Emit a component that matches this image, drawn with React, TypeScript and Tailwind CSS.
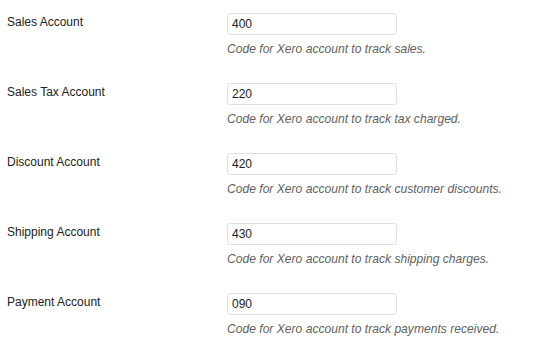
import React from 'react';

const rows = [
  { label: 'Sales Account', value: '400', hint: 'Code for Xero account to track sales.' },
  { label: 'Sales Tax Account', value: '220', hint: 'Code for Xero account to track tax charged.' },
  { label: 'Discount Account', value: '420', hint: 'Code for Xero account to track customer discounts.' },
  { label: 'Shipping Account', value: '430', hint: 'Code for Xero account to track shipping charges.' },
  { label: 'Payment Account', value: '090', hint: 'Code for Xero account to track payments received.' },
];

export default function App() {
  return (
    <div className="w-[543px] h-[361px] bg-white font-['Liberation_Sans',Arial,sans-serif] text-[12px] leading-[16px] text-[#222] overflow-hidden">
      {rows.map((row) => (
        <div key={row.label} className="flex h-[70px] pt-[13px]">
          {/* label column */}
          <div className="w-[227px] pl-[7px] pt-[1px]">{row.label}</div>

          <div className="flex flex-col">
            <input
              type="text"
              defaultValue={row.value}
              className="w-[170px] h-[22px] px-[4px] border border-[#dfdfdf] rounded-[3px] bg-white text-[12px] text-[#222] outline-none"
            />
            <p className="mt-[6px] italic text-[#5f5f5f] text-[12.1px]">{row.hint}</p>
          </div>
        </div>
      ))}
    </div>
  );
}
